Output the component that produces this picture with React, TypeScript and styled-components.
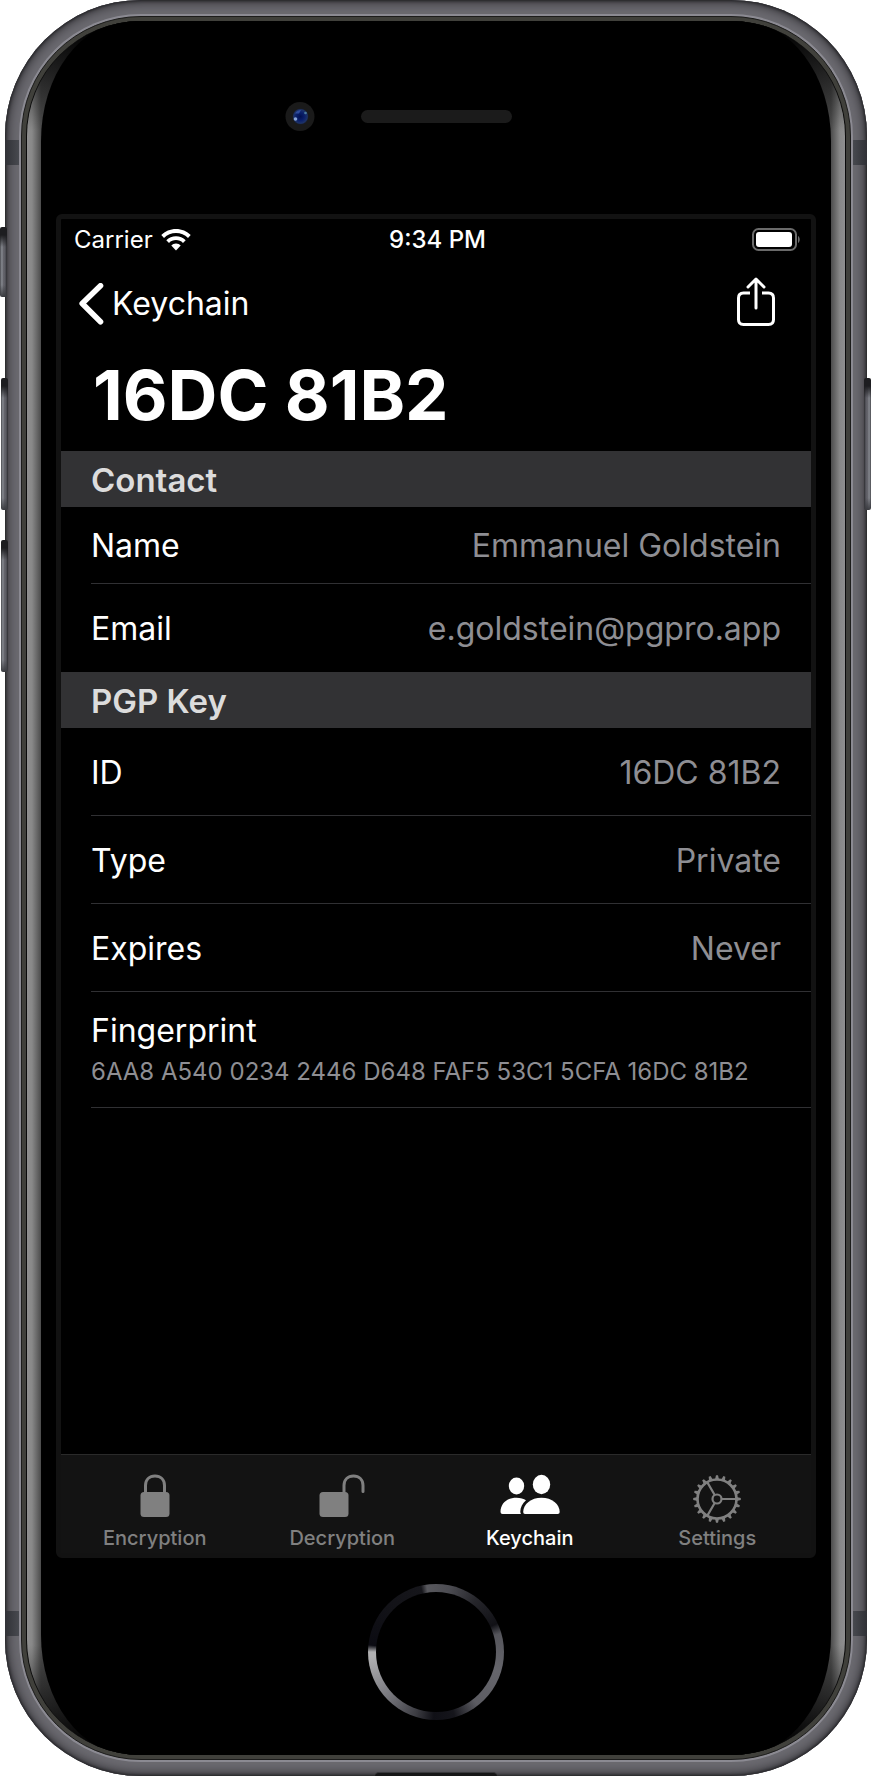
import { useId, type ReactNode } from 'react';
import styled, { createGlobalStyle } from 'styled-components';

const GlobalStyle = createGlobalStyle`
  *, *::before, *::after { box-sizing: border-box; }
  body {
    margin: 0;
    background: #fff;
    color: #fff;
    font-family: Inter, "Liberation Sans", sans-serif;
  }
  button { font: inherit; color: inherit; background: none; border: 0; padding: 0; cursor: pointer; }
`;

/* ---------- device ---------- */

const Device = styled.div`
  position: relative;
  min-width: 720px;
  padding: 0 4px 0 5px;
`;

const Metal = styled.div`
  position: relative;
  padding: 16px;
  border-radius: 136px;
  overflow: hidden;
  background: #66656b;
  box-shadow: inset 0 0 3px 1px #222225, inset 0 0 12px 2px #2d2c30, inset 0 0 0 16px #6b6a70;
`;

const Rim = styled.div`
  position: relative;
  padding: 4px;
  border-radius: 120px;
  border: 1px solid #1c1c1b;
  background: #40403b;
  box-shadow: 0 0 0 2px #8b8a92;
`;

const Bevel = styled.div`
  border-radius: 115px;
  overflow: hidden;
  border: 1px solid #0a0a0a;
  border-width: 0 1px;
  padding: 0 14px;
  background:
    linear-gradient(#000, transparent 110px, transparent calc(100% - 110px), #000),
    linear-gradient(90deg, #8f8f8f, #888 5px, #4c4c4c 14px, #3c3c3c 40px, #000 100px, #000 calc(100% - 100px), #3c3c3c calc(100% - 40px), #4c4c4c calc(100% - 14px), #888 calc(100% - 5px), #8f8f8f);
`;

const Glass = styled.div`
  display: flex;
  flex-direction: column;
  border-radius: 90px / 120px;
  background: #000;
  padding: 0 15px;
`;

const Antenna = styled.span<{ $side: 'left' | 'right'; $edge: 'top' | 'bottom' }>`
  position: absolute;
  ${p => p.$side}: 0;
  ${p => p.$edge}: 140px;
  width: 16px;
  height: 25px;
  background: linear-gradient(${p => (p.$side === 'left' ? '90deg' : '270deg')}, #303136, #4b4d53);
`;

const SideKey = styled.span<{ $side: 'left' | 'right'; $top: number; $height: number }>`
  position: absolute;
  ${p => p.$side}: ${p => (p.$height > 100 && p.$side === 'left' ? 1 : 0)}px;
  top: ${p => p.$top}px;
  width: 7px;
  height: ${p => p.$height}px;
  border-radius: 2px;
  background:
    linear-gradient(#1d1d20 8px, transparent 20px, transparent calc(100% - 12px), #3a3b40),
    linear-gradient(${p => (p.$side === 'left' ? '90deg' : '270deg')}, #4a4b50, #8c8f96 2px, #66666d 3px, #5c5c63 5px, #2c2c30);
`;

const Port = styled.span`
  position: absolute;
  bottom: 0;
  left: 50%;
  width: 122px;
  height: 4px;
  margin-left: -61px;
  border-radius: 6px 6px 0 0;
  background: #161617;
  border-top: 1px solid #39393c;
`;

const Forehead = styled.div`
  display: grid;
  grid-template-columns: 1fr auto 1fr;
  align-items: center;
  height: 193px;
  padding-bottom: 2px;
`;

const Camera = styled.svg`
  justify-self: end;
  margin-right: 46px;
  width: 30px;
  height: 30px;
`;

const Speaker = styled.span`
  width: 151px;
  height: 13px;
  border-radius: 7px;
  background: #1b1b1b;
`;

const Chin = styled.div`
  display: flex;
  justify-content: center;
  align-items: flex-start;
  height: 197px;
  padding-top: 26px;
`;

const HomeButton = styled.button`
  width: 136px;
  height: 136px;
  border-radius: 50%;
  padding: 8px;
  background: conic-gradient(
    from -8deg,
    #58585d 0deg, #4c4c52 20deg, #26262b 45deg, #111116 73deg, #55555b 82deg,
    #66666c 115deg, #5c5c62 150deg, #15151b 172deg, #101016 190deg,
    #3c3c42 206deg, #77777d 235deg, #b0b0b2 274deg, #b0b0b2 278deg,
    #0b0b12 284deg, #121217 320deg, #16161b 355deg, #58585d 360deg
  );
  &::before {
    content: '';
    display: block;
    height: 100%;
    border-radius: 50%;
    background: #000;
  }
`;

/* ---------- screen ---------- */

const Screen = styled.div`
  display: flex;
  flex-direction: column;
  min-height: 1344px;
  border: 5px solid #121212;
  border-radius: 6px;
  background: #000;
`;

const StatusBar = styled.div`
  display: grid;
  grid-template-columns: 1fr auto 1fr;
  align-items: center;
  height: 41px;
  padding: 1px 10px 0 13px;
  font-size: 24px;
  line-height: 40px;
`;

const Carrier = styled.span`
  display: flex;
  align-items: center;
  gap: 8px;
`;

const Clock = styled.time`
  font-weight: 500;
`;

const Battery = styled.svg`
  justify-self: end;
  width: 49px;
  height: 24px;
`;

const NavBar = styled.nav`
  display: flex;
  justify-content: space-between;
  align-items: center;
  height: 88px;
  padding: 0 35px 0 17px;
`;

const BackButton = styled.button`
  display: flex;
  align-items: center;
  gap: 8px;
  font-size: 32px;
  line-height: 44px;
`;

const Title = styled.h1`
  margin: 0;
  height: 103px;
  padding: 0 32px;
  font-size: 69px;
  font-weight: 700;
  line-height: 94px;
`;

const SectionHeader = styled.h2`
  margin: 0;
  padding: 2px 30px 0;
  background: #323234;
  color: #dcdcdc;
  font-size: 33px;
  font-weight: 600;
  line-height: 54px;
`;

const List = styled.dl`
  margin: 0;
  padding-left: 30px;
`;

const Row = styled.div<{ $height: number; $line?: boolean }>`
  display: flex;
  justify-content: space-between;
  align-items: center;
  height: ${p => p.$height}px;
  padding: 2px 30px 0 0;
  border-bottom: ${p => (p.$line ? '1px solid #303033' : '0')};
  font-size: 32px;
  line-height: 44px;
`;

const StackedRow = styled(Row)`
  flex-direction: column;
  justify-content: center;
  align-items: flex-start;
  padding-top: 0;
`;

const Label = styled.dt``;

const Value = styled.dd`
  margin: 0;
  color: #8e8e93;
`;

const SmallValue = styled(Value)`
  font-size: 24px;
  line-height: 38px;
`;

const TabBar = styled.nav`
  display: grid;
  grid-template-columns: repeat(4, 1fr);
  height: 99px;
  margin-top: auto;
  border-top: 1px solid #2a2a2a;
  background: #131313;
`;

const Tab = styled.button<{ $active?: boolean }>`
  && { color: ${p => (p.$active ? '#fff' : '#808080')}; }
  display: flex;
  flex-direction: column;
  align-items: center;
  gap: 1px;
  padding-top: 16px;
  font-size: 20px;
  font-weight: 500;
  line-height: 28px;
  svg { display: block; width: 64px; height: 52px; }
`;

/* ---------- icons ---------- */

const WifiIcon = () => (
  <svg width="30" height="22" viewBox="0 0 30 22" fill="#fff" aria-hidden="true">
    <path d="M15 0C9.300 0 4 2.200.300 6.100L3 8.900C6.200 5.700 10.400 3.900 15 3.900S23.800 5.700 27 8.900L29.700 6.100C26 2.200 20.700 0 15 0Z" />
    <path d="M15 7.300C11.300 7.300 7.900 8.700 5.300 11.200L8 13.900C9.900 12.100 12.300 11.100 15 11.100S20.100 12.100 22 13.900L24.700 11.200C22.100 8.700 18.700 7.300 15 7.300Z" />
    <path d="M15 14.500C13.100 14.500 11.500 15.200 10.300 16.500L15 21.500L19.700 16.500C18.500 15.200 16.900 14.500 15 14.500Z" />
  </svg>
);

const BatteryIcon = () => (
  <Battery viewBox="0 0 49 24" role="img" aria-label="Battery full">
    <rect x="1" y="1" width="43" height="21" rx="5.500" fill="none" stroke="#6a6a6a" strokeWidth="2" />
    <rect x="4" y="4" width="36" height="15" rx="3" fill="#fff" />
    <path d="M46 8C48.300 9.300 48.300 13.700 46 15Z" fill="#6a6a6a" />
  </Battery>
);

const ChevronIcon = () => (
  <svg width="26" height="42" viewBox="0 0 26 42" fill="none" stroke="#fff" strokeWidth="5.600" strokeLinecap="round" strokeLinejoin="round" aria-hidden="true">
    <path d="M22.500 2.800L4.200 20.500L22.500 38.700" />
  </svg>
);

const ShareIcon = () => (
  <svg width="40" height="50" viewBox="0 0 40 50" fill="none" stroke="#fff" strokeWidth="3" strokeLinecap="round" strokeLinejoin="round" aria-hidden="true">
    <path d="M14 16H7.500Q2.500 16 2.500 21V42.500Q2.500 47.500 7.500 47.500H32.500Q37.500 47.500 37.500 42.500V21Q37.500 16 32.500 16H26" strokeLinecap="butt" />
    <path d="M20 31V2.500M12 10L20 2L28 10" />
  </svg>
);

const LockIcon = () => (
  <svg viewBox="0 0 64 52" fill="currentColor" aria-hidden="true">
    <rect x="17.500" y="21" width="29" height="25" rx="3.500" />
    <path d="M22.500 22V14.500C22.500 8.500 26.500 5 32 5S41.500 8.500 41.500 14.500V22" fill="none" stroke="currentColor" strokeWidth="3" />
  </svg>
);

const UnlockIcon = () => (
  <svg viewBox="0 0 64 52" fill="currentColor" aria-hidden="true">
    <rect x="9.500" y="21" width="29" height="25" rx="3.500" />
    <path d="M34 22V14.500C34 8.500 38 5 43.500 5S53 8.500 53 14.500V20.500" fill="none" stroke="currentColor" strokeWidth="3" strokeLinecap="round" />
  </svg>
);

const PeopleIcon = () => (
  <svg viewBox="0 0 64 52" fill="currentColor" aria-hidden="true">
    <ellipse cx="18.500" cy="15" rx="7.700" ry="8.400" />
    <ellipse cx="43.500" cy="13.500" rx="8.700" ry="9.700" />
    <path d="M4.500 43Q2.500 43 2.500 41C2.500 32 9.500 26.700 18.500 26.700C22.500 26.700 25.700 27.800 28 29.300C24.500 32.200 22.300 36.500 22.300 40.500Q22.300 42 23 43Z" />
    <path d="M27 43Q25.200 43 25.200 41C25.200 33 33 26.700 43.500 26.700S61.700 33 61.700 41Q61.700 43 59.700 43Z" />
  </svg>
);

const GearIcon = () => (
  <svg viewBox="0 0 64 52" fill="none" stroke="currentColor" aria-hidden="true">
    <circle cx="32" cy="28" r="19.500" strokeWidth="2.600" />
    <circle cx="32" cy="28" r="4.500" strokeWidth="2.200" />
    <path d="M36.500 28H51.500M29.700 24L22.200 11.100M29.700 32L22.200 44.900" strokeWidth="2.200" />
    {Array.from({ length: 20 }, (_, i) => (
      <path key={i} d="M51.500 26L55.800 27V29L51.500 30Z" fill="currentColor" stroke="none" transform={`rotate(${i * 18} 32 28)`} />
    ))}
  </svg>
);

const CameraLens = () => {
  const id = useId();
  return (
    <Camera viewBox="0 0 30 30" aria-hidden="true">
      <defs>
        <radialGradient id={id}>
          <stop offset="0" stopColor="#02104e" />
          <stop offset="0.500" stopColor="#0a1f6b" />
          <stop offset="0.850" stopColor="#1d3268" />
          <stop offset="1" stopColor="#181c28" />
        </radialGradient>
      </defs>
      <circle cx="15" cy="14.500" r="14.500" fill="#1a1a1a" />
      <circle cx="15.500" cy="14.500" r="8" fill={`url(#${id})`} />
      <path d="M10 11.500Q12 8 16 8L14 11.500Z" fill="#2f4c9c" />
      <circle cx="10.500" cy="17" r="1.800" fill="#86a4d8" />
      <circle cx="20.500" cy="11" r="1.300" fill="#4b7ba0" />
    </Camera>
  );
};

/* ---------- data ---------- */

const contact = [
  { label: 'Name', value: 'Emmanuel Goldstein', height: 77, line: true },
  { label: 'Email', value: 'e.goldstein@pgpro.app', height: 88, line: false },
];

const key = [
  { label: 'ID', value: '16DC 81B2' },
  { label: 'Type', value: 'Private' },
  { label: 'Expires', value: 'Never' },
];

const tabs: { label: string; icon: ReactNode; active?: boolean }[] = [
  { label: 'Encryption', icon: <LockIcon /> },
  { label: 'Decryption', icon: <UnlockIcon /> },
  { label: 'Keychain', icon: <PeopleIcon />, active: true },
  { label: 'Settings', icon: <GearIcon /> },
];

export default function App() {
  return (
    <>
      <GlobalStyle />
      <Device>
        <Metal>
          <Antenna $side="left" $edge="top" />
          <Antenna $side="right" $edge="top" />
          <Antenna $side="left" $edge="bottom" />
          <Antenna $side="right" $edge="bottom" />
          <Port />
          <Rim>
            <Bevel>
              <Glass>
                <Forehead>
                  <CameraLens />
                  <Speaker />
                </Forehead>
                <Screen>
                  <StatusBar>
                    <Carrier>Carrier <WifiIcon /></Carrier>
                    <Clock>9:34 PM</Clock>
                    <BatteryIcon />
                  </StatusBar>
                  <NavBar>
                    <BackButton><ChevronIcon />Keychain</BackButton>
                    <button aria-label="Share"><ShareIcon /></button>
                  </NavBar>
                  <Title>16DC 81B2</Title>
                  <SectionHeader>Contact</SectionHeader>
                  <List>
                    {contact.map(r => (
                      <Row key={r.label} $height={r.height} $line={r.line}>
                        <Label>{r.label}</Label>
                        <Value>{r.value}</Value>
                      </Row>
                    ))}
                  </List>
                  <SectionHeader>PGP Key</SectionHeader>
                  <List>
                    {key.map(r => (
                      <Row key={r.label} $height={88} $line>
                        <Label>{r.label}</Label>
                        <Value>{r.value}</Value>
                      </Row>
                    ))}
                    <StackedRow $height={116} $line>
                      <Label>Fingerprint</Label>
                      <SmallValue>6AA8 A540 0234 2446 D648 FAF5 53C1 5CFA 16DC 81B2</SmallValue>
                    </StackedRow>
                  </List>
                  <TabBar>
                    {tabs.map(t => (
                      <Tab key={t.label} $active={t.active} aria-current={t.active ? 'page' : undefined}>
                        {t.icon}
                        {t.label}
                      </Tab>
                    ))}
                  </TabBar>
                </Screen>
                <Chin>
                  <HomeButton aria-label="Home" />
                </Chin>
              </Glass>
            </Bevel>
          </Rim>
        </Metal>
        <SideKey $side="left" $top={227} $height={70} />
        <SideKey $side="left" $top={378} $height={132} />
        <SideKey $side="left" $top={540} $height={132} />
        <SideKey $side="right" $top={378} $height={132} />
      </Device>
    </>
  );
}
